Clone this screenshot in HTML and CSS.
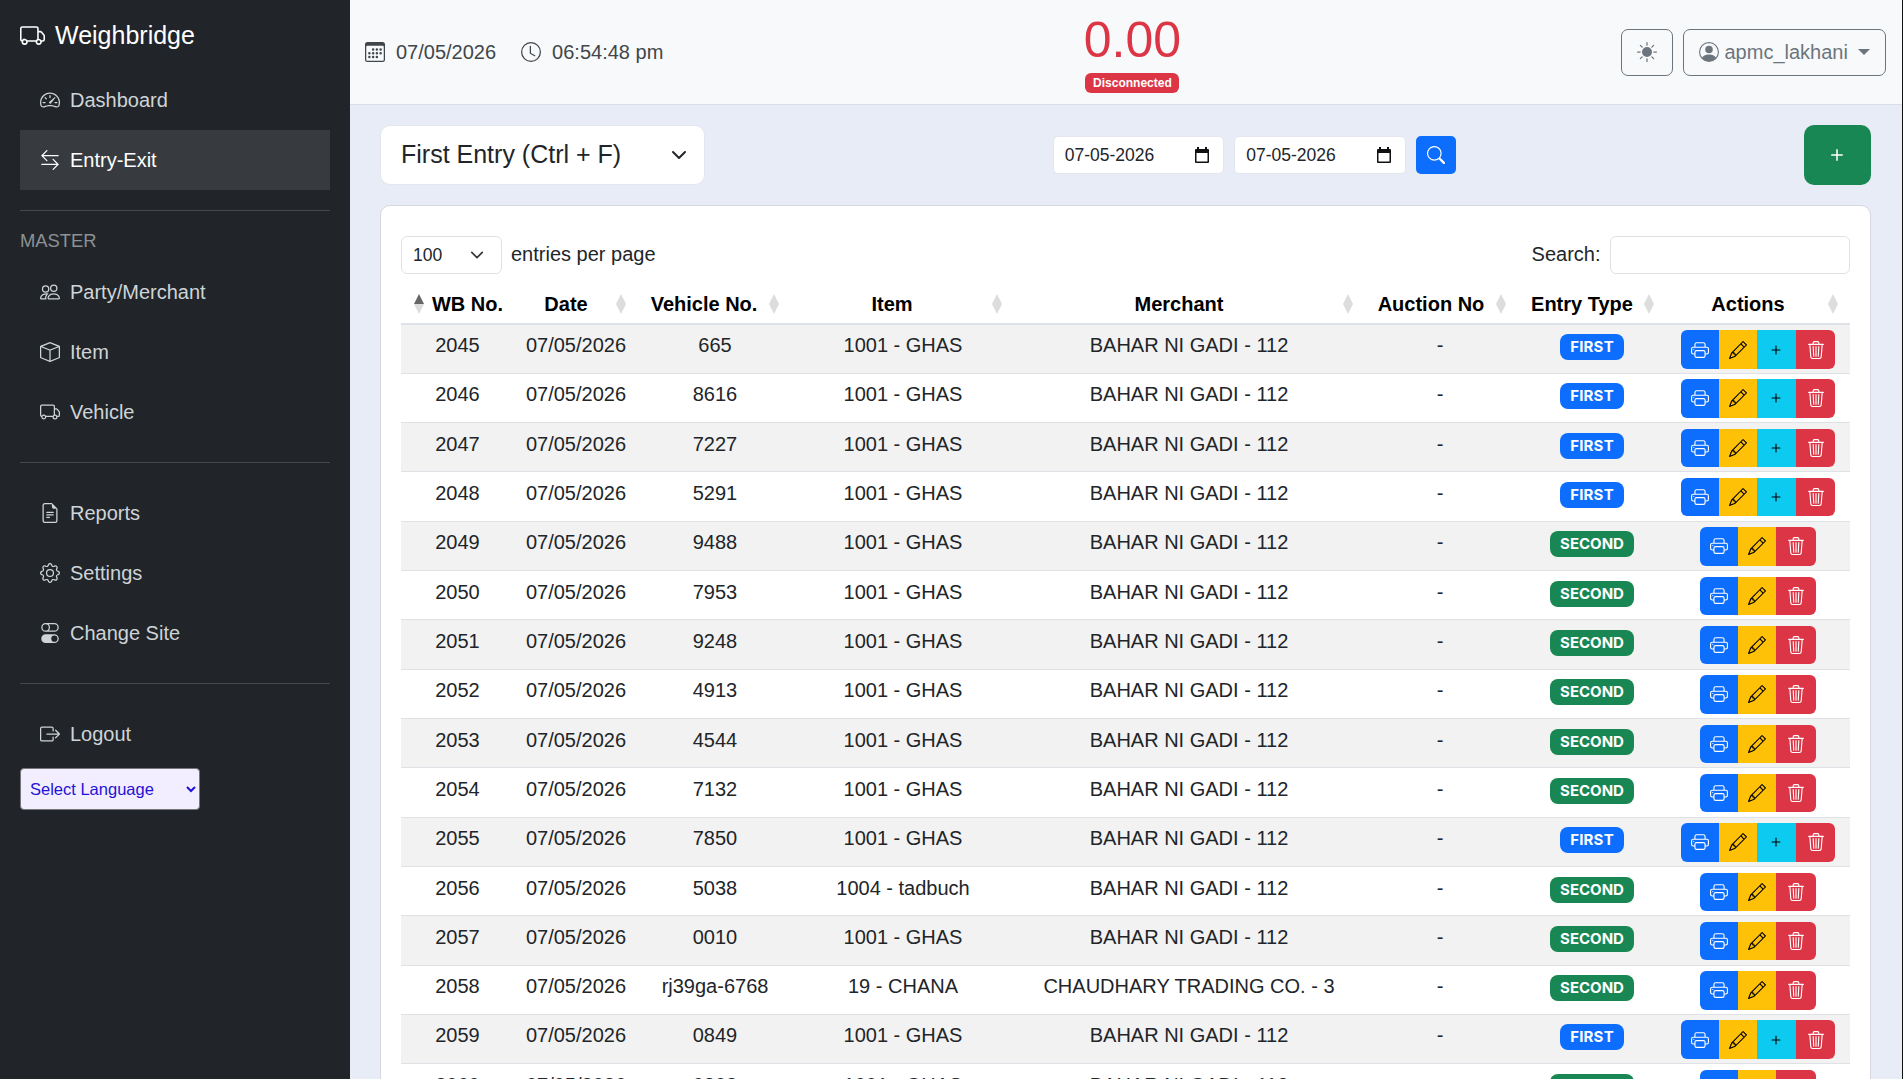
FILE: index.html
```html
<!DOCTYPE html>
<html lang="en">

<head>
    <meta charset="UTF-8">
    <meta name="viewport" content="width=device-width, initial-scale=1.0">
    <title>Weighbridge</title>
    <link rel="stylesheet" href="styles.css">
</head>

<body>

    <!-- Icon sprite -->
    <svg class="sprite" xmlns="http://www.w3.org/2000/svg">
        <symbol id="i-truck" viewBox="0 0 16 16"><path d="M0 3.5A1.5 1.5 0 0 1 1.5 2h9A1.5 1.5 0 0 1 12 3.5V5h1.02a1.5 1.5 0 0 1 1.17.563l1.481 1.85a1.5 1.5 0 0 1 .329.938V10.5a1.5 1.5 0 0 1-1.5 1.5H14a2 2 0 1 1-4 0H5a2 2 0 1 1-3.998-.085A1.5 1.5 0 0 1 0 10.5zm1.294 7.456A2 2 0 0 1 4.732 11h5.536a2 2 0 0 1 .732-.732V3.5a.5.5 0 0 0-.5-.5h-9a.5.5 0 0 0-.5.5v7a.5.5 0 0 0 .294.456M12 10a2 2 0 0 1 1.732 1h.768a.5.5 0 0 0 .5-.5V8.35a.5.5 0 0 0-.11-.312l-1.48-1.85A.5.5 0 0 0 13.02 6H12zm-9 1a1 1 0 1 0 0 2 1 1 0 0 0 0-2m9 0a1 1 0 1 0 0 2 1 1 0 0 0 0-2"/></symbol>
        <symbol id="i-speed" viewBox="0 0 16 16"><path d="M8 4a.5.5 0 0 1 .5.5V6a.5.5 0 0 1-1 0V4.5A.5.5 0 0 1 8 4M3.732 5.732a.5.5 0 0 1 .707 0l.915.914a.5.5 0 1 1-.708.708l-.914-.915a.5.5 0 0 1 0-.707M2 10a.5.5 0 0 1 .5-.5h1.586a.5.5 0 0 1 0 1H2.5A.5.5 0 0 1 2 10m9.5 0a.5.5 0 0 1 .5-.5h1.5a.5.5 0 0 1 0 1H12a.5.5 0 0 1-.5-.5m.754-4.246a.39.39 0 0 0-.527-.02L7.547 9.31a.91.91 0 1 0 1.302 1.258l3.434-4.297a.39.39 0 0 0-.029-.518z"/><path d="M0 10a8 8 0 1 1 15.547 2.661c-.442 1.253-1.845 1.602-2.932 1.25C11.309 13.488 9.475 13 8 13c-1.474 0-3.31.488-4.615.911-1.087.352-2.49.003-2.932-1.25A8 8 0 0 1 0 10m8-7a7 7 0 0 0-6.603 9.329c.203.575.923.876 1.68.63C4.397 12.533 6.358 12 8 12s3.604.532 4.923.96c.757.245 1.477-.056 1.68-.631A7 7 0 0 0 8 3"/></symbol>
        <symbol id="i-arrows" viewBox="0 0 16 16"><path d="M1 11.5a.5.5 0 0 0 .5.5h11.793l-3.147 3.146a.5.5 0 0 0 .708.708l4-4a.5.5 0 0 0 0-.708l-4-4a.5.5 0 0 0-.708.708L13.293 11H1.5a.5.5 0 0 0-.5.5m14-7a.5.5 0 0 1-.5.5H2.707l3.147 3.146a.5.5 0 1 1-.708.708l-4-4a.5.5 0 0 1 0-.708l4-4a.5.5 0 1 1 .708.708L2.707 4H14.5a.5.5 0 0 1 .5.5"/></symbol>
        <symbol id="i-people" viewBox="0 0 16 16"><path d="M15 14s1 0 1-1-1-4-5-4-5 3-5 4 1 1 1 1zm-7.978-1L7 12.996c.001-.264.167-1.03.76-1.72C8.312 10.629 9.282 10 11 10c1.717 0 2.687.63 3.24 1.276.593.69.758 1.457.76 1.72l-.008.002-.014.002zM11 7a2 2 0 1 0 0-4 2 2 0 0 0 0 4m3-2a3 3 0 1 1-6 0 3 3 0 0 1 6 0M6.936 9.28a6 6 0 0 0-1.23-.247A7 7 0 0 0 5 9c-4 0-5 3-5 4q0 1 1 1h4.216A2.24 2.24 0 0 1 5 13c0-1.01.377-2.042 1.09-2.904.243-.294.526-.569.846-.816M4.92 10A5.5 5.5 0 0 0 4 13H1c0-.26.164-1.03.76-1.724.545-.636 1.492-1.256 3.16-1.275ZM1.5 5.5a3 3 0 1 1 6 0 3 3 0 0 1-6 0m3-2a2 2 0 1 0 0 4 2 2 0 0 0 0-4"/></symbol>
        <symbol id="i-box" viewBox="0 0 16 16"><path d="M8.186 1.113a.5.5 0 0 0-.372 0L1.846 3.5 8 5.961 14.154 3.5zM15 4.239l-6.5 2.6v7.922l6.5-2.6V4.24zM7.5 14.762V6.838L1 4.239v7.925zM7.443.184a1.5 1.5 0 0 1 1.114 0l7.129 2.852A.5.5 0 0 1 16 3.5v8.662a1 1 0 0 1-.629.928l-7.185 2.874a.5.5 0 0 1-.372 0L.63 13.09a1 1 0 0 1-.63-.928V3.5a.5.5 0 0 1 .314-.464z"/></symbol>
        <symbol id="i-file" viewBox="0 0 16 16"><path d="M5.5 7a.5.5 0 0 0 0 1h5a.5.5 0 0 0 0-1zM5 9.5a.5.5 0 0 1 .5-.5h5a.5.5 0 0 1 0 1h-5a.5.5 0 0 1-.5-.5m0 2a.5.5 0 0 1 .5-.5h2a.5.5 0 0 1 0 1h-2a.5.5 0 0 1-.5-.5"/><path d="M9.5 0H4a2 2 0 0 0-2 2v12a2 2 0 0 0 2 2h8a2 2 0 0 0 2-2V4.5zm0 1v2A1.5 1.5 0 0 0 11 4.5h2V14a1 1 0 0 1-1 1H4a1 1 0 0 1-1-1V2a1 1 0 0 1 1-1z"/></symbol>
        <symbol id="i-gear" viewBox="0 0 16 16"><path d="M8 4.754a3.246 3.246 0 1 0 0 6.492 3.246 3.246 0 0 0 0-6.492M5.754 8a2.246 2.246 0 1 1 4.492 0 2.246 2.246 0 0 1-4.492 0"/><path d="M9.796 1.343c-.527-1.79-3.065-1.79-3.592 0l-.094.319a.873.873 0 0 1-1.255.52l-.292-.16c-1.64-.892-3.433.902-2.54 2.541l.159.292a.873.873 0 0 1-.52 1.255l-.319.094c-1.79.527-1.79 3.065 0 3.592l.319.094a.873.873 0 0 1 .52 1.255l-.16.292c-.892 1.64.901 3.434 2.541 2.54l.292-.159a.873.873 0 0 1 1.255.52l.094.319c.527 1.79 3.065 1.79 3.592 0l.094-.319a.873.873 0 0 1 1.255-.52l.292.16c1.64.893 3.434-.902 2.54-2.541l-.159-.292a.873.873 0 0 1 .52-1.255l.319-.094c1.79-.527 1.79-3.065 0-3.592l-.319-.094a.873.873 0 0 1-.52-1.255l.16-.292c.893-1.64-.902-3.433-2.541-2.54l-.292.159a.873.873 0 0 1-1.255-.52zm-2.633.283c.246-.835 1.428-.835 1.674 0l.094.319a1.873 1.873 0 0 0 2.693 1.115l.291-.16c.764-.415 1.6.42 1.184 1.185l-.159.292a1.873 1.873 0 0 0 1.116 2.692l.318.094c.835.246.835 1.428 0 1.674l-.319.094a1.873 1.873 0 0 0-1.115 2.693l.16.291c.415.764-.42 1.6-1.185 1.184l-.291-.159a1.873 1.873 0 0 0-2.693 1.116l-.094.318c-.246.835-1.428.835-1.674 0l-.094-.319a1.873 1.873 0 0 0-2.692-1.115l-.292.16c-.764.415-1.6-.42-1.184-1.185l.159-.291A1.873 1.873 0 0 0 1.945 8.93l-.319-.094c-.835-.246-.835-1.428 0-1.674l.319-.094A1.873 1.873 0 0 0 3.06 4.377l-.16-.292c-.415-.764.42-1.6 1.185-1.184l.292.159a1.873 1.873 0 0 0 2.692-1.115z"/></symbol>
        <symbol id="i-toggles" viewBox="0 0 16 16"><path d="M4.5 9a3.5 3.5 0 1 0 0 7h7a3.5 3.5 0 1 0 0-7zm7 6a2.5 2.5 0 1 1 0-5 2.5 2.5 0 0 1 0 5m-7-14a2.5 2.5 0 1 0 0 5 2.5 2.5 0 0 0 0-5m2.45 0A3.5 3.5 0 0 1 8 3.5 3.5 3.5 0 0 1 6.95 6h4.55a2.5 2.5 0 0 0 0-5zM4.5 0h7a3.5 3.5 0 1 1 0 7h-7a3.5 3.5 0 1 1 0-7"/></symbol>
        <symbol id="i-logout" viewBox="0 0 16 16"><path d="M10 12.5a.5.5 0 0 1-.5.5h-8a.5.5 0 0 1-.5-.5v-9a.5.5 0 0 1 .5-.5h8a.5.5 0 0 1 .5.5v2a.5.5 0 0 0 1 0v-2A1.5 1.5 0 0 0 9.5 2h-8A1.5 1.5 0 0 0 0 3.5v9A1.5 1.5 0 0 0 1.5 14h8a1.5 1.5 0 0 0 1.5-1.5v-2a.5.5 0 0 0-1 0z"/><path d="M15.854 8.354a.5.5 0 0 0 0-.708l-3-3a.5.5 0 0 0-.708.708L14.293 7.5H5.5a.5.5 0 0 0 0 1h8.793l-2.147 2.146a.5.5 0 0 0 .708.708z"/></symbol>
        <symbol id="i-calendar" viewBox="0 0 16 16"><path d="M14 0H2a2 2 0 0 0-2 2v12a2 2 0 0 0 2 2h12a2 2 0 0 0 2-2V2a2 2 0 0 0-2-2M1 3.857C1 3.384 1.448 3 2 3h12c.552 0 1 .384 1 .857v10.286c0 .473-.448.857-1 .857H2c-.552 0-1-.384-1-.857z"/><path d="M6.5 7a1 1 0 1 0 0-2 1 1 0 0 0 0 2m3 0a1 1 0 1 0 0-2 1 1 0 0 0 0 2m3 0a1 1 0 1 0 0-2 1 1 0 0 0 0 2m-9 3a1 1 0 1 0 0-2 1 1 0 0 0 0 2m3 0a1 1 0 1 0 0-2 1 1 0 0 0 0 2m3 0a1 1 0 1 0 0-2 1 1 0 0 0 0 2m3 0a1 1 0 1 0 0-2 1 1 0 0 0 0 2m-9 3a1 1 0 1 0 0-2 1 1 0 0 0 0 2m3 0a1 1 0 1 0 0-2 1 1 0 0 0 0 2m3 0a1 1 0 1 0 0-2 1 1 0 0 0 0 2"/></symbol>
        <symbol id="i-clock" viewBox="0 0 16 16"><path d="M8 3.5a.5.5 0 0 0-1 0V9a.5.5 0 0 0 .252.434l3.5 2a.5.5 0 0 0 .496-.868L8 8.71z"/><path d="M8 16A8 8 0 1 0 8 0a8 8 0 0 0 0 16m7-8A7 7 0 1 1 1 8a7 7 0 0 1 14 0"/></symbol>
        <symbol id="i-sun" viewBox="0 0 16 16"><path d="M12 8a4 4 0 1 1-8 0 4 4 0 0 1 8 0M8 0a.5.5 0 0 1 .5.5v2a.5.5 0 0 1-1 0v-2A.5.5 0 0 1 8 0m0 13a.5.5 0 0 1 .5.5v2a.5.5 0 0 1-1 0v-2A.5.5 0 0 1 8 13m8-5a.5.5 0 0 1-.5.5h-2a.5.5 0 0 1 0-1h2a.5.5 0 0 1 .5.5M3 8a.5.5 0 0 1-.5.5h-2a.5.5 0 0 1 0-1h2A.5.5 0 0 1 3 8m10.657-5.657a.5.5 0 0 1 0 .707l-1.414 1.415a.5.5 0 1 1-.707-.708l1.414-1.414a.5.5 0 0 1 .707 0m-9.193 9.193a.5.5 0 0 1 0 .707L3.05 13.657a.5.5 0 0 1-.707-.707l1.414-1.414a.5.5 0 0 1 .707 0m9.193 2.121a.5.5 0 0 1-.707 0l-1.414-1.414a.5.5 0 0 1 .707-.707l1.414 1.414a.5.5 0 0 1 0 .707M4.464 4.465a.5.5 0 0 1-.707 0L2.343 3.05a.5.5 0 1 1 .707-.707l1.414 1.414a.5.5 0 0 1 0 .708"/></symbol>
        <symbol id="i-person" viewBox="0 0 16 16"><path d="M11 6a3 3 0 1 1-6 0 3 3 0 0 1 6 0"/><path d="M0 8a8 8 0 1 1 16 0A8 8 0 0 1 0 8m8-7a7 7 0 0 0-5.468 11.37C3.242 11.226 4.805 10 8 10s4.757 1.225 5.468 2.37A7 7 0 0 0 8 1"/></symbol>
        <symbol id="i-search" viewBox="0 0 16 16"><path d="M11.742 10.344a6.5 6.5 0 1 0-1.397 1.398h-.001q.044.06.098.115l3.85 3.85a1 1 0 0 0 1.415-1.414l-3.85-3.85a1 1 0 0 0-.115-.1zM12 6.5a5.5 5.5 0 1 1-11 0 5.5 5.5 0 0 1 11 0"/></symbol>
        <symbol id="i-plus" viewBox="0 0 16 16"><path d="M8 4a.5.5 0 0 1 .5.5v3h3a.5.5 0 0 1 0 1h-3v3a.5.5 0 0 1-1 0v-3h-3a.5.5 0 0 1 0-1h3v-3A.5.5 0 0 1 8 4"/></symbol>
        <symbol id="i-printer" viewBox="0 0 16 16"><path d="M2.5 8a.5.5 0 1 0 0-1 .5.5 0 0 0 0 1"/><path d="M5 1a2 2 0 0 0-2 2v2H2a2 2 0 0 0-2 2v3a2 2 0 0 0 2 2h1v1a2 2 0 0 0 2 2h6a2 2 0 0 0 2-2v-1h1a2 2 0 0 0 2-2V7a2 2 0 0 0-2-2h-1V3a2 2 0 0 0-2-2zM4 3a1 1 0 0 1 1-1h6a1 1 0 0 1 1 1v2H4zm1 5a2 2 0 0 0-2 2v1H2a1 1 0 0 1-1-1V7a1 1 0 0 1 1-1h12a1 1 0 0 1 1 1v3a1 1 0 0 1-1 1h-1v-1a2 2 0 0 0-2-2zm7 2v3a1 1 0 0 1-1 1H5a1 1 0 0 1-1-1v-3a1 1 0 0 1 1-1h6a1 1 0 0 1 1 1"/></symbol>
        <symbol id="i-pencil" viewBox="0 0 16 16"><path d="M12.146.146a.5.5 0 0 1 .708 0l3 3a.5.5 0 0 1 0 .708l-10 10a.5.5 0 0 1-.168.11l-5 2a.5.5 0 0 1-.65-.65l2-5a.5.5 0 0 1 .11-.168zM11.207 2.5 13.5 4.793 14.793 3.5 12.5 1.207zm1.586 3L10.5 3.207 4 9.707V10h.5a.5.5 0 0 1 .5.5v.5h.5a.5.5 0 0 1 .5.5v.5h.293zm-9.761 5.175-.106.106-1.528 3.821 3.821-1.528.106-.106A.5.5 0 0 1 5 12.5V12h-.5a.5.5 0 0 1-.5-.5V11h-.5a.5.5 0 0 1-.468-.325"/></symbol>
        <symbol id="i-trash" viewBox="0 0 16 16"><path d="M6.5 1h3a.5.5 0 0 1 .5.5v1H6v-1a.5.5 0 0 1 .5-.5M11 2.5v-1A1.5 1.5 0 0 0 9.5 0h-3A1.5 1.5 0 0 0 5 1.5v1H1.5a.5.5 0 0 0 0 1h.538l.853 10.66A2 2 0 0 0 4.885 16h6.23a2 2 0 0 0 1.994-1.84l.853-10.66h.538a.5.5 0 0 0 0-1zm1.958 1-.846 10.58a1 1 0 0 1-.997.92h-6.23a1 1 0 0 1-.997-.92L3.042 3.5zm-7.487 1a.5.5 0 0 1 .528.47l.5 8.5a.5.5 0 0 1-.998.06L5 5.03a.5.5 0 0 1 .47-.53Zm5.058 0a.5.5 0 0 1 .47.53l-.5 8.5a.5.5 0 1 1-.998-.06l.5-8.5a.5.5 0 0 1 .528-.47M8 4.5a.5.5 0 0 1 .5.5v8.5a.5.5 0 0 1-1 0V5a.5.5 0 0 1 .5-.5"/></symbol>
        <symbol id="i-date" viewBox="0 0 16 16"><path d="M3 0h2v2h6V0h2v2h1a1 1 0 0 1 1 1v12a1 1 0 0 1-1 1H2a1 1 0 0 1-1-1V3a1 1 0 0 1 1-1h1zM2.500 6v8.500h11V6z"/></symbol>
    </svg>

    <div class="app">

        <!-- Sidebar -->
        <aside class="sidebar">
            <div class="brand"><svg class="brand-icon"><use href="#i-truck"/></svg>Weighbridge</div>
            <a class="nav-link"><svg class="icon"><use href="#i-speed"/></svg>Dashboard</a>
            <a class="nav-link active"><svg class="icon"><use href="#i-arrows"/></svg>Entry-Exit</a>
            <hr class="divider">
            <div class="nav-title">MASTER</div>
            <a class="nav-link"><svg class="icon"><use href="#i-people"/></svg>Party/Merchant</a>
            <a class="nav-link"><svg class="icon"><use href="#i-box"/></svg>Item</a>
            <a class="nav-link"><svg class="icon"><use href="#i-truck"/></svg>Vehicle</a>
            <hr class="divider">
            <a class="nav-link"><svg class="icon"><use href="#i-file"/></svg>Reports</a>
            <a class="nav-link"><svg class="icon"><use href="#i-gear"/></svg>Settings</a>
            <a class="nav-link"><svg class="icon"><use href="#i-toggles"/></svg>Change Site</a>
            <hr class="divider">
            <a class="nav-link"><svg class="icon"><use href="#i-logout"/></svg>Logout</a>
            <select class="lang-select">
                <option>Select Language</option>
            </select>
        </aside>

        <div class="content">

            <!-- Top bar -->
            <header class="topbar">
                <div class="clock">
                    <svg class="icon"><use href="#i-calendar"/></svg><span>07/05/2026</span>
                    <svg class="icon clock-icon"><use href="#i-clock"/></svg><span>06:54:48 pm</span>
                </div>
                <div class="weight">
                    <div class="weight-value">0.00</div>
                    <span class="status-badge">Disconnected</span>
                </div>
                <div class="top-actions">
                    <button class="btn-outline btn-theme"><svg class="icon"><use href="#i-sun"/></svg></button>
                    <button class="btn-outline btn-user"><svg class="icon"><use href="#i-person"/></svg>apmc_lakhani<span class="caret"></span></button>
                </div>
            </header>

            <main class="main">

                <!-- Toolbar -->
                <div class="toolbar">
                    <div class="entry-select"><span class="entry-text">First Entry (Ctrl + F)</span><svg class="chevron" viewBox="0 0 16 16"><path d="M2 5l6 6 6-6"/></svg></div>
                    <div class="date-filter">
                        <div class="date-field">07-05-2026<svg class="date-icon"><use href="#i-date"/></svg></div>
                        <div class="date-field">07-05-2026<svg class="date-icon"><use href="#i-date"/></svg></div>
                        <button class="btn-search"><svg class="icon"><use href="#i-search"/></svg></button>
                    </div>
                    <button class="btn-add"><svg class="add-icon"><use href="#i-plus"/></svg></button>
                </div>

                <!-- Entries table -->
                <section class="card">
                    <div class="table-controls">
                        <div class="length-control">
                            <div class="length-select">100<svg class="chevron-sm" viewBox="0 0 16 16"><path d="M2 5l6 6 6-6"/></svg></div>
                            <span>entries per page</span>
                        </div>
                        <div class="search-control">
                            <label for="tableSearch">Search:</label>
                            <input type="text" id="tableSearch">
                        </div>
                    </div>

                    <table class="entries">
                        <colgroup>
                            <col class="col-wb"><col class="col-date"><col class="col-vehicle"><col class="col-item">
                            <col class="col-merchant"><col class="col-auction"><col class="col-type"><col class="col-actions">
                        </colgroup>
                        <thead>
                            <tr>
                                <th class="th-wb"><span class="sort sort-left asc"></span>WB No.</th>
                                <th>Date<span class="sort"></span></th>
                                <th>Vehicle No.<span class="sort"></span></th>
                                <th>Item<span class="sort"></span></th>
                                <th>Merchant<span class="sort"></span></th>
                                <th>Auction No<span class="sort"></span></th>
                                <th>Entry Type<span class="sort"></span></th>
                                <th>Actions<span class="sort"></span></th>
                            </tr>
                        </thead>
                        <tbody>
                            <tr><td>2045</td><td>07/05/2026</td><td>665</td><td>1001 - GHAS</td><td>BAHAR NI GADI - 112</td><td>-</td><td><span class="badge first">FIRST</span></td><td><div class="btn-group"><button class="b-print"><svg class="icon"><use href="#i-printer"/></svg></button><button class="b-edit"><svg class="icon"><use href="#i-pencil"/></svg></button><button class="b-add"><svg class="icon"><use href="#i-plus"/></svg></button><button class="b-del"><svg class="icon"><use href="#i-trash"/></svg></button></div></td></tr>
                            <tr><td>2046</td><td>07/05/2026</td><td>8616</td><td>1001 - GHAS</td><td>BAHAR NI GADI - 112</td><td>-</td><td><span class="badge first">FIRST</span></td><td><div class="btn-group"><button class="b-print"><svg class="icon"><use href="#i-printer"/></svg></button><button class="b-edit"><svg class="icon"><use href="#i-pencil"/></svg></button><button class="b-add"><svg class="icon"><use href="#i-plus"/></svg></button><button class="b-del"><svg class="icon"><use href="#i-trash"/></svg></button></div></td></tr>
                            <tr><td>2047</td><td>07/05/2026</td><td>7227</td><td>1001 - GHAS</td><td>BAHAR NI GADI - 112</td><td>-</td><td><span class="badge first">FIRST</span></td><td><div class="btn-group"><button class="b-print"><svg class="icon"><use href="#i-printer"/></svg></button><button class="b-edit"><svg class="icon"><use href="#i-pencil"/></svg></button><button class="b-add"><svg class="icon"><use href="#i-plus"/></svg></button><button class="b-del"><svg class="icon"><use href="#i-trash"/></svg></button></div></td></tr>
                            <tr><td>2048</td><td>07/05/2026</td><td>5291</td><td>1001 - GHAS</td><td>BAHAR NI GADI - 112</td><td>-</td><td><span class="badge first">FIRST</span></td><td><div class="btn-group"><button class="b-print"><svg class="icon"><use href="#i-printer"/></svg></button><button class="b-edit"><svg class="icon"><use href="#i-pencil"/></svg></button><button class="b-add"><svg class="icon"><use href="#i-plus"/></svg></button><button class="b-del"><svg class="icon"><use href="#i-trash"/></svg></button></div></td></tr>
                            <tr><td>2049</td><td>07/05/2026</td><td>9488</td><td>1001 - GHAS</td><td>BAHAR NI GADI - 112</td><td>-</td><td><span class="badge second">SECOND</span></td><td><div class="btn-group"><button class="b-print"><svg class="icon"><use href="#i-printer"/></svg></button><button class="b-edit"><svg class="icon"><use href="#i-pencil"/></svg></button><button class="b-del"><svg class="icon"><use href="#i-trash"/></svg></button></div></td></tr>
                            <tr><td>2050</td><td>07/05/2026</td><td>7953</td><td>1001 - GHAS</td><td>BAHAR NI GADI - 112</td><td>-</td><td><span class="badge second">SECOND</span></td><td><div class="btn-group"><button class="b-print"><svg class="icon"><use href="#i-printer"/></svg></button><button class="b-edit"><svg class="icon"><use href="#i-pencil"/></svg></button><button class="b-del"><svg class="icon"><use href="#i-trash"/></svg></button></div></td></tr>
                            <tr><td>2051</td><td>07/05/2026</td><td>9248</td><td>1001 - GHAS</td><td>BAHAR NI GADI - 112</td><td>-</td><td><span class="badge second">SECOND</span></td><td><div class="btn-group"><button class="b-print"><svg class="icon"><use href="#i-printer"/></svg></button><button class="b-edit"><svg class="icon"><use href="#i-pencil"/></svg></button><button class="b-del"><svg class="icon"><use href="#i-trash"/></svg></button></div></td></tr>
                            <tr><td>2052</td><td>07/05/2026</td><td>4913</td><td>1001 - GHAS</td><td>BAHAR NI GADI - 112</td><td>-</td><td><span class="badge second">SECOND</span></td><td><div class="btn-group"><button class="b-print"><svg class="icon"><use href="#i-printer"/></svg></button><button class="b-edit"><svg class="icon"><use href="#i-pencil"/></svg></button><button class="b-del"><svg class="icon"><use href="#i-trash"/></svg></button></div></td></tr>
                            <tr><td>2053</td><td>07/05/2026</td><td>4544</td><td>1001 - GHAS</td><td>BAHAR NI GADI - 112</td><td>-</td><td><span class="badge second">SECOND</span></td><td><div class="btn-group"><button class="b-print"><svg class="icon"><use href="#i-printer"/></svg></button><button class="b-edit"><svg class="icon"><use href="#i-pencil"/></svg></button><button class="b-del"><svg class="icon"><use href="#i-trash"/></svg></button></div></td></tr>
                            <tr><td>2054</td><td>07/05/2026</td><td>7132</td><td>1001 - GHAS</td><td>BAHAR NI GADI - 112</td><td>-</td><td><span class="badge second">SECOND</span></td><td><div class="btn-group"><button class="b-print"><svg class="icon"><use href="#i-printer"/></svg></button><button class="b-edit"><svg class="icon"><use href="#i-pencil"/></svg></button><button class="b-del"><svg class="icon"><use href="#i-trash"/></svg></button></div></td></tr>
                            <tr><td>2055</td><td>07/05/2026</td><td>7850</td><td>1001 - GHAS</td><td>BAHAR NI GADI - 112</td><td>-</td><td><span class="badge first">FIRST</span></td><td><div class="btn-group"><button class="b-print"><svg class="icon"><use href="#i-printer"/></svg></button><button class="b-edit"><svg class="icon"><use href="#i-pencil"/></svg></button><button class="b-add"><svg class="icon"><use href="#i-plus"/></svg></button><button class="b-del"><svg class="icon"><use href="#i-trash"/></svg></button></div></td></tr>
                            <tr><td>2056</td><td>07/05/2026</td><td>5038</td><td>1004 - tadbuch</td><td>BAHAR NI GADI - 112</td><td>-</td><td><span class="badge second">SECOND</span></td><td><div class="btn-group"><button class="b-print"><svg class="icon"><use href="#i-printer"/></svg></button><button class="b-edit"><svg class="icon"><use href="#i-pencil"/></svg></button><button class="b-del"><svg class="icon"><use href="#i-trash"/></svg></button></div></td></tr>
                            <tr><td>2057</td><td>07/05/2026</td><td>0010</td><td>1001 - GHAS</td><td>BAHAR NI GADI - 112</td><td>-</td><td><span class="badge second">SECOND</span></td><td><div class="btn-group"><button class="b-print"><svg class="icon"><use href="#i-printer"/></svg></button><button class="b-edit"><svg class="icon"><use href="#i-pencil"/></svg></button><button class="b-del"><svg class="icon"><use href="#i-trash"/></svg></button></div></td></tr>
                            <tr><td>2058</td><td>07/05/2026</td><td>rj39ga-6768</td><td>19 - CHANA</td><td>CHAUDHARY TRADING CO. - 3</td><td>-</td><td><span class="badge second">SECOND</span></td><td><div class="btn-group"><button class="b-print"><svg class="icon"><use href="#i-printer"/></svg></button><button class="b-edit"><svg class="icon"><use href="#i-pencil"/></svg></button><button class="b-del"><svg class="icon"><use href="#i-trash"/></svg></button></div></td></tr>
                            <tr><td>2059</td><td>07/05/2026</td><td>0849</td><td>1001 - GHAS</td><td>BAHAR NI GADI - 112</td><td>-</td><td><span class="badge first">FIRST</span></td><td><div class="btn-group"><button class="b-print"><svg class="icon"><use href="#i-printer"/></svg></button><button class="b-edit"><svg class="icon"><use href="#i-pencil"/></svg></button><button class="b-add"><svg class="icon"><use href="#i-plus"/></svg></button><button class="b-del"><svg class="icon"><use href="#i-trash"/></svg></button></div></td></tr>
                            <tr><td>2060</td><td>07/05/2026</td><td>0808</td><td>1001 - GHAS</td><td>BAHAR NI GADI - 112</td><td>-</td><td><span class="badge second">SECOND</span></td><td><div class="btn-group"><button class="b-print"><svg class="icon"><use href="#i-printer"/></svg></button><button class="b-edit"><svg class="icon"><use href="#i-pencil"/></svg></button><button class="b-del"><svg class="icon"><use href="#i-trash"/></svg></button></div></td></tr>
                        </tbody>
                    </table>
                </section>
            </main>
        </div>
    </div>

</body>

</html>
```

FILE: styles.css
```css
/* Basic Reset */
* {
    margin: 0;
    padding: 0;
    box-sizing: border-box;
}

body {
    font-family: 'Liberation Sans', Arial, sans-serif;
    font-size: 20px;
    line-height: 30px;
    color: #212529;
    height: 100vh;
    overflow: hidden;
    background: #111;
}

.sprite {
    display: none;
}

button {
    font-family: inherit;
    cursor: pointer;
}

.icon {
    width: 20px;
    height: 20px;
    fill: currentColor;
    flex: none;
}

.app {
    display: flex;
    height: 100vh;
    margin-right: 1.5px;
}

/* Sidebar */
.sidebar {
    width: 350px;
    flex: none;
    background: #212529;
    color: #ced4d8;
    padding: 15px 20px 0;
    display: flex;
    flex-direction: column;
    align-items: stretch;
}

.brand {
    display: flex;
    align-items: center;
    gap: 10px;
    height: 40px;
    margin-bottom: 15px;
    font-size: 25px;
    color: #fff;
}

.brand-icon {
    width: 25px;
    height: 25px;
    fill: currentColor;
}

.nav-link {
    display: flex;
    align-items: center;
    gap: 10px;
    height: 60px;
    flex: none;
    padding-left: 20px;
    color: #ced4d8;
}

.nav-link.active {
    background: #373b3f;
    color: #fff;
}

.divider {
    border: 0;
    border-top: 1px solid #45494d;
    margin: 20px 0;
    flex: none;
}

.nav-title {
    font-size: 18.4px;
    line-height: 20px;
    height: 31px;
    color: #8c9196;
}

.lang-select {
    width: 180px;
    height: 42px;
    margin-top: 4px;
    padding-left: 5px;
    border: 1px solid #767676;
    border-radius: 4px;
    background: #f3eeff;
    color: #1f12d6;
    font-family: inherit;
    font-size: 16.5px;
}

/* Top bar */
.content {
    flex: 1;
    min-width: 0;
    display: flex;
    flex-direction: column;
    background: #e8ecf7;
}

.topbar {
    height: 105px;
    flex: none;
    display: flex;
    align-items: center;
    justify-content: space-between;
    padding: 0 15px;
    background: #f8f9fa;
    border-bottom: 1px solid #d9dee9;
}

.clock {
    display: flex;
    align-items: center;
    gap: 11px;
    color: #41464b;
}

.clock svg {
    color: #41464b;
}

.clock-icon {
    margin-left: 14px;
}

.weight {
    display: flex;
    flex-direction: column;
    align-items: center;
    margin-right: 20px;
    padding-bottom: 2px;
}

.weight-value {
    font-size: 50px;
    line-height: 60px;
    color: #dc3545;
}

.status-badge {
    margin-top: 3px;
    height: 20px;
    width: 94px;
    border-radius: 6px;
    background: #dc3545;
    color: #fff;
    font-size: 12px;
    font-weight: 700;
    line-height: 20px;
    text-align: center;
}

.top-actions {
    display: flex;
    gap: 10px;
}

.btn-outline {
    display: flex;
    align-items: center;
    height: 47px;
    background: transparent;
    border: 1px solid #6c757d;
    border-radius: 7px;
    color: #6c757d;
    font-size: 20px;
}

.btn-theme {
    width: 52px;
    justify-content: center;
}

.btn-user {
    width: 203px;
    padding-left: 15px;
    gap: 5px;
}

.caret {
    margin-left: 5px;
    border-top: 6px solid #6c757d;
    border-left: 6px solid transparent;
    border-right: 6px solid transparent;
}

/* Toolbar */
.main {
    padding: 20px 31px 0 30px;
}

.toolbar {
    display: flex;
    align-items: center;
    justify-content: space-between;
    margin-bottom: 20px;
}

.entry-select {
    display: flex;
    align-items: center;
    justify-content: space-between;
    width: 325px;
    height: 60px;
    padding: 0 17px 0 20px;
    background: #fff;
    border: 1px solid #e3e6ee;
    border-radius: 10px;
    font-size: 25px;
    color: #212529;
}

.entry-text {
    margin-top: -2px;
}

.chevron {
    width: 16px;
    height: 16px;
    fill: none;
    stroke: #212529;
    stroke-width: 2;
    stroke-linecap: round;
    stroke-linejoin: round;
}

.date-filter {
    display: flex;
    align-items: center;
    gap: 10px;
}

.date-field {
    display: flex;
    align-items: center;
    justify-content: space-between;
    width: 171.5px;
    height: 38px;
    padding: 0 13px 0 11px;
    background: #fff;
    border: 1px solid #e3e6ee;
    border-radius: 5px;
    font-size: 17.5px;
}

.date-icon {
    width: 16px;
    height: 16px;
    fill: #111;
}

.btn-search {
    display: flex;
    align-items: center;
    justify-content: center;
    width: 40px;
    height: 38px;
    border: 0;
    border-radius: 5px;
    background: #0d6efd;
    color: #fff;
}

.btn-search .icon {
    width: 18px;
    height: 18px;
}

.btn-add {
    display: flex;
    align-items: center;
    justify-content: center;
    width: 67px;
    height: 60px;
    border: 0;
    border-radius: 10px;
    background: #198754;
    color: #fff;
}

.add-icon {
    width: 24px;
    height: 24px;
    fill: currentColor;
}

/* Card */
.card {
    background: #fff;
    border: 1px solid #d5d8df;
    border-radius: 10px;
    padding: 30px 20px 0;
}

.table-controls {
    display: flex;
    align-items: center;
    justify-content: space-between;
    height: 38px;
    margin-bottom: 11px;
}

.length-control,
.search-control {
    display: flex;
    align-items: center;
    gap: 9px;
}

.length-control span,
.search-control label {
    margin-top: -2px;
}

.length-select {
    display: flex;
    align-items: center;
    justify-content: space-between;
    width: 101px;
    height: 38px;
    padding: 0 17px 0 11px;
    border: 1px solid #dee2e6;
    border-radius: 6px;
    font-size: 17.5px;
}

.chevron-sm {
    width: 14px;
    height: 14px;
    fill: none;
    stroke: #343a40;
    stroke-width: 2;
    stroke-linecap: round;
    stroke-linejoin: round;
}

.search-control input {
    width: 240px;
    height: 38px;
    border: 1px solid #dee2e6;
    border-radius: 6px;
    outline: none;
}

/* Table */
.entries {
    width: 1449px;
    table-layout: fixed;
    border-collapse: collapse;
}

.col-wb { width: 113px; }
.col-date { width: 124px; }
.col-vehicle { width: 154px; }
.col-item { width: 222px; }
.col-merchant { width: 352px; }
.col-auction { width: 148px; }
.col-type { width: 156px; }
.col-actions { width: 180px; }

.entries th {
    position: relative;
    height: 39px;
    padding: 0 20px 1px 0;
    font-weight: 700;
    white-space: nowrap;
    color: #000;
    border-bottom: 2px solid #dee2e6;
}

.entries th.th-wb {
    padding: 0 8px 1px 28px;
}

.entries th:nth-child(3),
.entries th:nth-child(4),
.entries th:nth-child(5) {
    padding-right: 22px;
}

.entries th:nth-child(6) {
    padding-right: 18px;
}

.entries th:nth-child(8) {
    padding-right: 24px;
}

.entries td {
    height: 49.33px;
    padding: 5.4px 0 0;
    vertical-align: top;
    text-align: center;
    border-bottom: 1px solid #dee2e6;
    white-space: nowrap;
}

.entries td:nth-child(5) {
    padding-right: 2px;
}

.entries td:nth-child(8) {
    padding-right: 4px;
}

.entries tbody tr:nth-child(odd) td {
    background: #f2f2f2;
}

/* Sort arrows */
.sort {
    position: absolute;
    right: 14px;
    top: 9px;
    width: 10px;
    height: 20px;
}

.sort::before,
.sort::after {
    content: "";
    position: absolute;
    left: 0;
    border-left: 5px solid transparent;
    border-right: 5px solid transparent;
}

.sort::before {
    top: 0;
    border-bottom: 10px solid #ddd;
}

.sort::after {
    bottom: 0;
    border-top: 10px solid #ddd;
}

th:nth-child(2) .sort { right: 12px; }
th:nth-child(3) .sort { right: 13px; }
th:nth-child(4) .sort { right: 12px; }
th:nth-child(5) .sort { right: 13px; }
th:nth-child(6) .sort { right: 8px; }
th:nth-child(7) .sort { right: 16px; }
th:nth-child(8) .sort { right: 12px; }

.sort-left {
    left: 13px;
    right: auto;
}

.sort.asc::before {
    border-bottom-color: #666;
}

/* Badges */
.badge {
    display: inline-block;
    vertical-align: top;
    margin-top: 4px;
    height: 26px;
    padding: 0 10px;
    border-radius: 8px;
    color: #fff;
    font-family: Inter, 'Liberation Sans', sans-serif;
    font-size: 15px;
    font-weight: 700;
    line-height: 26px;
}

.badge.first {
    background: #0d6efd;
    padding: 0 10.5px;
    letter-spacing: 0.2px;
}

.badge.second {
    background: #198754;
}

/* Action buttons */
.btn-group {
    display: inline-flex;
    vertical-align: top;
    height: 38.5px;
    border-radius: 6px;
    overflow: hidden;
}

.btn-group button {
    display: flex;
    align-items: center;
    justify-content: center;
    width: 38px;
    border: 0;
}

.btn-group .icon {
    width: 18px;
    height: 18px;
}

.b-print {
    background: #0d6efd;
    color: #fff;
}

.b-edit {
    background: #ffc107;
    color: #000;
}

.btn-group .b-add {
    width: 39px;
    background: #0dcaf0;
    color: #000;
}

.btn-group .b-del {
    width: 39.5px;
    background: #dc3545;
    color: #fff;
}
```
